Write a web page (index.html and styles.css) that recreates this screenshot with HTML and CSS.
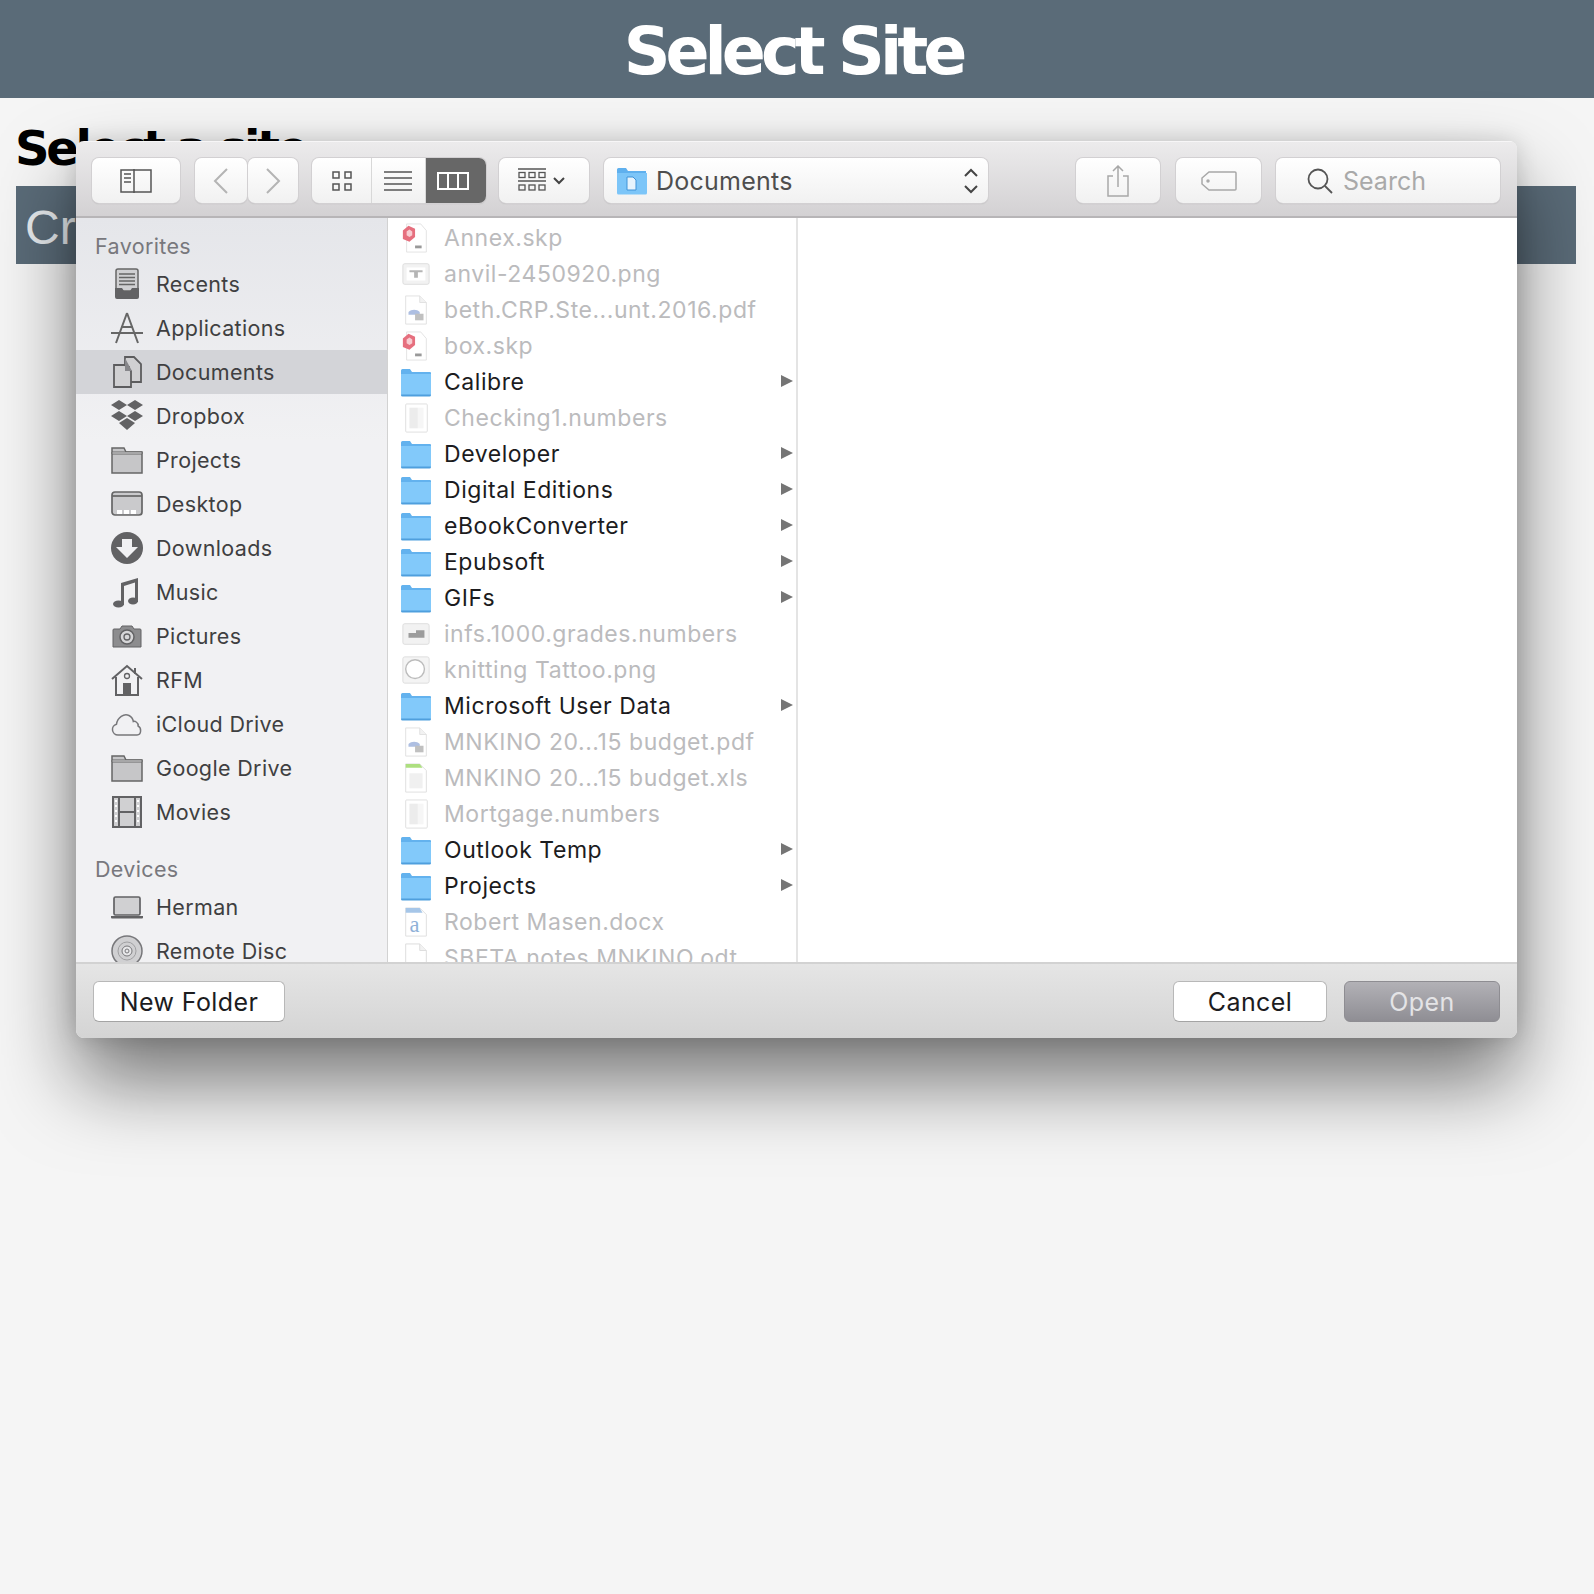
FILE: index.html
```html
<!DOCTYPE html>
<html lang="en">
<head>
  <meta charset="UTF-8" />
  <title>Select Site</title>
  <link rel="stylesheet" href="styles.css">
</head>
<body>
  <svg class="defs" xmlns="http://www.w3.org/2000/svg">
    <symbol id="i-folder" viewBox="0 0 32 30">
      <path d="M1 7V3.5A1.5 1.5 0 0 1 2.500 2H10l2 3h18a1 1 0 0 1 1 1v2H1z" fill="#63b2ee"/>
      <path d="M1 7h30v20a2 2 0 0 1-2 2H3a2 2 0 0 1-2-2z" fill="#82c9fa"/>
      <path d="M1 27.500h30V28a1.500 1.500 0 0 1-1.500 1.500h-27A1.500 1.500 0 0 1 1 28z" fill="#4f9fdd"/>
    </symbol>
    <symbol id="i-page" viewBox="0 0 32 32">
      <path d="M5 1h15l7 7v23H5z" fill="#fff" stroke="#dcdcdc"/>
      <path d="M20 1v7h7" fill="#f2f2f2" stroke="#dcdcdc"/>
    </symbol>
    <symbol id="i-skp" viewBox="0 0 32 32">
      <path d="M6 1h15l6 7v23H6z" fill="#fff" stroke="#e2e2e2"/>
      <path d="M2 8l6-5 7 3v9l-6 5-7-3z" fill="#e66f7e"/>
      <path d="M6 9l3-2 3 2v4l-3 2-3-2z" fill="#f8cdd2"/>
      <rect x="15" y="24" width="7" height="3" fill="#999"/>
    </symbol>
    <symbol id="i-thumb" viewBox="0 0 32 32">
      <rect x="2" y="5" width="28" height="22" rx="2" fill="#f2f2f2" stroke="#dcdcdc"/>
      <rect x="6" y="9" width="20" height="14" fill="#fff"/>
      <path d="M9 12h14v2h-5v6h-4v-6H9z" fill="#b5b5b5"/>
    </symbol>
    <symbol id="i-sheet" viewBox="0 0 32 32">
      <rect x="2" y="5" width="28" height="22" rx="2" fill="#f2f2f2" stroke="#dcdcdc"/>
      <path d="M8 15h8v-3h9v8H8z" fill="#9c9c9c"/>
    </symbol>
    <symbol id="i-ring" viewBox="0 0 32 32">
      <rect x="2" y="2" width="28" height="28" rx="2" fill="#f4f4f4" stroke="#dcdcdc"/>
      <circle cx="15" cy="15" r="10" fill="#fff" stroke="#bcbcbc" stroke-width="1.500"/>
    </symbol>
    <symbol id="i-pdf" viewBox="0 0 32 32">
      <path d="M5 1h15l7 7v23H5z" fill="#fff" stroke="#e0e0e0"/>
      <path d="M20 1v7h7" fill="#f2f2f2" stroke="#e0e0e0"/>
      <path d="M8 18c3-3 9-3 12 0v3H8z" fill="#aebfe2"/>
      <rect x="15" y="20" width="9" height="7" fill="#c0c0c0"/>
    </symbol>
    <symbol id="i-numbers" viewBox="0 0 32 32">
      <rect x="5" y="1" width="23" height="30" rx="1" fill="#fff" stroke="#dedede"/>
      <rect x="9" y="5" width="9" height="22" fill="#ececec"/>
      <rect x="18" y="5" width="6" height="22" fill="#f6f6f6"/>
    </symbol>
    <symbol id="i-xls" viewBox="0 0 32 32">
      <path d="M5 1h15l7 7v23H5z" fill="#fff" stroke="#dedede"/>
      <path d="M5 1h15l3 4H5z" fill="#addf7f"/>
      <rect x="9" y="11" width="14" height="16" fill="#f0f0f0"/>
    </symbol>
    <symbol id="i-docx" viewBox="0 0 32 32">
      <path d="M5 1h15l7 7v23H5z" fill="#fff" stroke="#dedede"/>
      <path d="M5 1h15l3 5H5z" fill="#a6c6e8"/>
      <text x="9" y="27" font-family="Liberation Serif, serif" font-size="24" fill="#8fb1d8">a</text>
    </symbol>

    <symbol id="s-recents" viewBox="0 0 32 32">
      <rect x="5" y="1" width="22" height="22" rx="2" fill="#d0d0d2" stroke="#666" stroke-width="1.500"/>
      <path d="M8 6h16M8 9.500h16M8 13h16M8 16.500h16" stroke="#666" stroke-width="1.500"/>
      <path d="M4 20h7l2 3h6l2-3h7v9a2 2 0 0 1-2 2H6a2 2 0 0 1-2-2z" fill="#626264"/>
    </symbol>
    <symbol id="s-apps" viewBox="0 0 32 32">
      <path d="M16 1L5 31M16 1l11 30M0 21h32M10 15h12" fill="none" stroke="#666" stroke-width="2"/>
    </symbol>
    <symbol id="s-docs" viewBox="0 0 32 32">
      <path d="M14 1h9l7 7v18H18V11h-4z" fill="#d0d0d2" stroke="#5c5c5e" stroke-width="1.800"/>
      <path d="M3 9h11l6 6v16H3z" fill="#d0d0d2" stroke="#5c5c5e" stroke-width="1.800"/>
      <path d="M14 2l7 13h-7z" fill="#86868a"/>
    </symbol>
    <symbol id="s-dropbox" viewBox="0 0 32 32" fill="#626264">
      <path d="M8 0l8 5-8 5-8-5zM24 0l8 5-8 5-8-5zM8 11l8 5-8 5-8-5zM24 11l8 5-8 5-8-5z"/>
      <path d="M16 18l8 5-8 7-8-7z"/>
    </symbol>
    <symbol id="s-folder" viewBox="0 0 32 32">
      <path d="M1 8V4h12l2 4h16v21H1z" fill="#c6c6c8" stroke="#666" stroke-width="1.500"/>
      <path d="M1 8h30v2H1z" fill="#e8e8ea" stroke="#666"/>
    </symbol>
    <symbol id="s-desktop" viewBox="0 0 32 32">
      <rect x="1" y="4" width="30" height="23" rx="3" fill="#cacacc" stroke="#666" stroke-width="1.700"/>
      <path d="M1 8h30" stroke="#666" stroke-width="1.700"/>
      <path d="M6 22h5v4H6zM13 22h5v4h-5zM20 22h5v4h-5z" fill="#fff"/>
    </symbol>
    <symbol id="s-downloads" viewBox="0 0 32 32">
      <circle cx="16" cy="16" r="16" fill="#626264"/>
      <path d="M11 7h10v8h6L16 26 5 15h6z" fill="#f1f1f3"/>
    </symbol>
    <symbol id="s-music" viewBox="0 0 32 32" fill="#626264">
      <path d="M10 7l17-5v24h-3V6.500L13 10v19h-3z"/>
      <ellipse cx="7.500" cy="28" rx="5.500" ry="3.500"/>
      <ellipse cx="22" cy="25" rx="5" ry="3.500"/>
    </symbol>
    <symbol id="s-camera" viewBox="0 0 32 32">
      <path d="M3 9h6l2-3h10l2 3h6a1 1 0 0 1 1 1v17H2V10a1 1 0 0 1 1-1z" fill="#8c8c8e" stroke="#626264"/>
      <circle cx="16" cy="17" r="7" fill="#d6d6d8" stroke="#626264" stroke-width="1.500"/>
      <circle cx="16" cy="17" r="3" fill="none" stroke="#626264" stroke-width="1.300"/>
    </symbol>
    <symbol id="s-house" viewBox="0 0 32 32">
      <path d="M1 15L16 2l15 13M5 13v18h22V13M24 4v6" fill="none" stroke="#626264" stroke-width="2"/>
      <circle cx="16" cy="12" r="2.500" fill="none" stroke="#626264" stroke-width="1.300"/>
      <rect x="12" y="19" width="8" height="12" fill="#626264"/>
    </symbol>
    <symbol id="s-cloud" viewBox="0 0 32 32">
      <path d="M7 27a5.500 5.500 0 0 1-1.500-10.800C6.500 9.500 13 5 18 7.500c2.500 1.200 4 3.500 4.300 6 1-.3 2-.2 3 .5 1.500 1 2 2.500 1.800 4 3.500 1.500 3.500 9-1 9z" fill="none" stroke="#77777a" stroke-width="1.500"/>
    </symbol>
    <symbol id="s-movies" viewBox="0 0 32 32">
      <rect x="2" y="1" width="28" height="30" fill="#d0d0d2" stroke="#626264" stroke-width="2"/>
      <path d="M8 1v30M24 1v30M8 16h16" stroke="#626264" stroke-width="2"/>
      <path d="M4 4h2v2H4zM4 9h2v2H4zM4 14h2v2H4zM4 19h2v2H4zM4 24h2v2H4zM26 4h2v2h-2zM26 9h2v2h-2zM26 14h2v2h-2zM26 19h2v2h-2zM26 24h2v2h-2z" fill="#fff"/>
    </symbol>
    <symbol id="s-laptop" viewBox="0 0 32 32">
      <rect x="3" y="6" width="26" height="18" rx="1.500" fill="#d0d0d2" stroke="#626264" stroke-width="1.700"/>
      <path d="M0 25h32v1.500a1 1 0 0 1-1 1H1a1 1 0 0 1-1-1z" fill="#626264"/>
    </symbol>
    <symbol id="s-disc" viewBox="0 0 32 32">
      <circle cx="16" cy="16" r="15" fill="#d0d0d2" stroke="#77777a" stroke-width="1.500"/>
      <circle cx="16" cy="16" r="9" fill="none" stroke="#a0a0a2"/>
      <circle cx="16" cy="16" r="5" fill="#e8e8ea" stroke="#77777a"/>
      <circle cx="16" cy="16" r="2" fill="none" stroke="#77777a"/>
    </symbol>
  </svg>

  <header class="site-header"><h1>Select Site</h1></header>
  <h2 class="page-title">Select a site</h2>
  <div class="create-bar">Create a new site</div>

  <div class="dialog">
    <div class="toolbar">
      <button class="tb-btn w-side">
        <svg width="32" height="24" viewBox="0 0 32 24" fill="none" stroke="#555"><rect x="1" y="1" width="30" height="22" stroke-width="1.500"/><path d="M14 0v24" stroke-width="1.500"/><path d="M4 5h7M4 9h7M4 13h7" stroke-width="1.500"/></svg>
      </button>
      <div class="nav-pair">
        <button class="tb-btn w-back">
          <svg width="16" height="26" viewBox="0 0 16 26" fill="none" stroke="#b4b4b4" stroke-width="2"><path d="M14 1L2 13l12 12"/></svg>
        </button>
        <button class="tb-btn w-next">
          <svg width="16" height="26" viewBox="0 0 16 26" fill="none" stroke="#b4b4b4" stroke-width="2"><path d="M2 1l12 12L2 25"/></svg>
        </button>
      </div>
      <div class="seg">
        <div class="seg-item w-icons">
          <svg width="20" height="20" viewBox="0 0 20 20" fill="none" stroke="#555" stroke-width="1.500"><rect x="1" y="1" width="6" height="6"/><rect x="13" y="1" width="6" height="6"/><rect x="1" y="13" width="6" height="6"/><rect x="13" y="13" width="6" height="6"/></svg>
        </div>
        <div class="seg-item w-list">
          <svg width="28" height="20" viewBox="0 0 28 20" fill="none" stroke="#555" stroke-width="1.500"><path d="M0 1h28M0 7h28M0 13h28M0 19h28"/></svg>
        </div>
        <div class="seg-item w-cols is-on">
          <svg width="32" height="18" viewBox="0 0 32 18" fill="none" stroke="#fff" stroke-width="2"><rect x="1" y="1" width="30" height="16"/><path d="M11 1v16M21 1v16"/></svg>
        </div>
      </div>
      <button class="tb-btn w-arrange">
        <svg width="28" height="26" viewBox="0 0 28 26" fill="none" stroke="#555" stroke-width="1.300"><path d="M0 1h28M0 13h28"/><rect x="1" y="4.500" width="6" height="5"/><rect x="11" y="4.500" width="6" height="5"/><rect x="21" y="4.500" width="6" height="5"/><rect x="1" y="17" width="6" height="5"/><rect x="11" y="17" width="6" height="5"/><rect x="21" y="17" width="6" height="5"/></svg>
        <svg width="12" height="8" viewBox="0 0 12 8" fill="none" stroke="#444" stroke-width="2"><path d="M1 1l5 5 5-5"/></svg>
      </button>
      <button class="tb-btn path-btn">
        <svg width="32" height="28" viewBox="0 0 32 28"><path d="M1 5V2.500A1.500 1.500 0 0 1 2.500 1H10l2 3h18v3H1z" fill="#5fb0ee"/><path d="M1 6h30v20a1.500 1.500 0 0 1-1.500 1.500h-27A1.500 1.500 0 0 1 1 26z" fill="#7cc5f8"/><path d="M11 10h6l3 3v10h-9z" fill="#e6f3fd" stroke="#3f93d8"/></svg>
        <span class="path-name">Documents</span>
        <svg class="updown" width="14" height="26" viewBox="0 0 14 26" fill="none" stroke="#444" stroke-width="2"><path d="M1 8l6-6 6 6M1 18l6 6 6-6"/></svg>
      </button>
      <button class="tb-btn w-share">
        <svg width="24" height="32" viewBox="0 0 24 32" fill="none" stroke="#a8a8a8" stroke-width="1.500"><path d="M7 11H2v20h20V11h-5M12 22V1M7 6l5-5 5 5"/></svg>
      </button>
      <button class="tb-btn w-tag">
        <svg width="36" height="20" viewBox="0 0 36 20" fill="none" stroke="#a8a8a8" stroke-width="1.500"><path d="M8 1h26a1 1 0 0 1 1 1v16a1 1 0 0 1-1 1H8l-7-6V7z"/><circle cx="7" cy="10" r="1" fill="#a8a8a8"/></svg>
      </button>
      <div class="tb-btn search-box">
        <svg width="26" height="26" viewBox="0 0 26 26" fill="none" stroke="#555" stroke-width="1.800"><circle cx="11" cy="11" r="9.500"/><path d="M18 18l7 7"/></svg>
        <span>Search</span>
      </div>
    </div>

    <div class="browser">
      <nav class="sidebar">
        <div class="side-head">Favorites</div>
        <div class="side-item"><svg class="side-icon"><use href="#s-recents"/></svg>Recents</div>
        <div class="side-item"><svg class="side-icon"><use href="#s-apps"/></svg>Applications</div>
        <div class="side-item is-current"><svg class="side-icon"><use href="#s-docs"/></svg>Documents</div>
        <div class="side-item"><svg class="side-icon"><use href="#s-dropbox"/></svg>Dropbox</div>
        <div class="side-item"><svg class="side-icon"><use href="#s-folder"/></svg>Projects</div>
        <div class="side-item"><svg class="side-icon"><use href="#s-desktop"/></svg>Desktop</div>
        <div class="side-item"><svg class="side-icon"><use href="#s-downloads"/></svg>Downloads</div>
        <div class="side-item"><svg class="side-icon"><use href="#s-music"/></svg>Music</div>
        <div class="side-item"><svg class="side-icon"><use href="#s-camera"/></svg>Pictures</div>
        <div class="side-item"><svg class="side-icon"><use href="#s-house"/></svg>RFM</div>
        <div class="side-item"><svg class="side-icon"><use href="#s-cloud"/></svg>iCloud Drive</div>
        <div class="side-item"><svg class="side-icon"><use href="#s-folder"/></svg>Google Drive</div>
        <div class="side-item"><svg class="side-icon"><use href="#s-movies"/></svg>Movies</div>
        <div class="side-head devices">Devices</div>
        <div class="side-item"><svg class="side-icon"><use href="#s-laptop"/></svg>Herman</div>
        <div class="side-item"><svg class="side-icon"><use href="#s-disc"/></svg>Remote Disc</div>
      </nav>

      <div class="file-col">
        <div class="file-row off"><svg class="file-icon"><use href="#i-skp"/></svg>Annex.skp</div>
        <div class="file-row off"><svg class="file-icon"><use href="#i-thumb"/></svg>anvil-2450920.png</div>
        <div class="file-row off"><svg class="file-icon"><use href="#i-pdf"/></svg>beth.CRP.Ste...unt.2016.pdf</div>
        <div class="file-row off"><svg class="file-icon"><use href="#i-skp"/></svg>box.skp</div>
        <div class="file-row dir"><svg class="file-icon"><use href="#i-folder"/></svg>Calibre</div>
        <div class="file-row off"><svg class="file-icon"><use href="#i-numbers"/></svg>Checking1.numbers</div>
        <div class="file-row dir"><svg class="file-icon"><use href="#i-folder"/></svg>Developer</div>
        <div class="file-row dir"><svg class="file-icon"><use href="#i-folder"/></svg>Digital Editions</div>
        <div class="file-row dir"><svg class="file-icon"><use href="#i-folder"/></svg>eBookConverter</div>
        <div class="file-row dir"><svg class="file-icon"><use href="#i-folder"/></svg>Epubsoft</div>
        <div class="file-row dir"><svg class="file-icon"><use href="#i-folder"/></svg>GIFs</div>
        <div class="file-row off"><svg class="file-icon"><use href="#i-sheet"/></svg>infs.1000.grades.numbers</div>
        <div class="file-row off"><svg class="file-icon"><use href="#i-ring"/></svg>knitting Tattoo.png</div>
        <div class="file-row dir"><svg class="file-icon"><use href="#i-folder"/></svg>Microsoft User Data</div>
        <div class="file-row off"><svg class="file-icon"><use href="#i-pdf"/></svg>MNKINO 20...15 budget.pdf</div>
        <div class="file-row off"><svg class="file-icon"><use href="#i-xls"/></svg>MNKINO 20...15 budget.xls</div>
        <div class="file-row off"><svg class="file-icon"><use href="#i-numbers"/></svg>Mortgage.numbers</div>
        <div class="file-row dir"><svg class="file-icon"><use href="#i-folder"/></svg>Outlook Temp</div>
        <div class="file-row dir"><svg class="file-icon"><use href="#i-folder"/></svg>Projects</div>
        <div class="file-row off"><svg class="file-icon"><use href="#i-docx"/></svg>Robert Masen.docx</div>
        <div class="file-row off"><svg class="file-icon"><use href="#i-page"/></svg>SBETA notes MNKINO.odt</div>
      </div>

      <div class="preview"></div>
    </div>

    <div class="dialog-foot">
      <button class="foot-btn new-folder">New Folder</button>
      <div class="foot-right">
        <button class="foot-btn cancel">Cancel</button>
        <button class="foot-btn open">Open</button>
      </div>
    </div>
  </div>
</body>
</html>
```
FILE: styles.css
```css
body {
  margin: 0;
  height: 1594px;
  background: #f5f5f5;
  font-family: "DejaVu Sans", sans-serif;
  overflow: hidden;
  position: relative;
}

.defs {
  display: none;
}

.site-header {
  box-sizing: border-box;
  height: 98px;
  padding: 4px 8px 0 0;
  background: #5a6b78;
  display: flex;
  align-items: center;
  justify-content: center;
}

.site-header h1 {
  margin: 0;
  color: white;
  font-size: 65px;
  font-weight: bold;
  letter-spacing: -5px;
}

.page-title {
  margin: 25px 0 0 15px;
  height: 63px;
  line-height: 50px;
  font-size: 48px;
  font-weight: bold;
  letter-spacing: -3.3px;
  color: black;
}

.create-bar {
  box-sizing: border-box;
  margin: 0 18px 0 16px;
  height: 78px;
  padding: 3px 0 0 9px;
  line-height: 78px;
  background: #5a6b78;
  color: #e6eaed;
  font-family: "Liberation Sans", sans-serif;
  font-size: 48px;
}

/* the file dialog floats over the page */
.dialog {
  position: absolute;
  left: 76px;
  top: 141px;
  width: 1441px;
  height: 897px;
  display: flex;
  flex-direction: column;
  border-radius: 8px;
  overflow: hidden;
  font-family: Inter, sans-serif;
  box-shadow: 0 44px 80px rgba(0,0,0,0.52), 0 0 22px rgba(0,0,0,0.14);
}

.toolbar {
  box-sizing: border-box;
  height: 77px;
  flex: none;
  padding: 16px 17px 0 15px;
  display: flex;
  background: linear-gradient(#ecebec, #d3d1d3);
  border-top: 1px solid #f7f6f7;
  border-bottom: 2px solid #b7b5b7;
}

.tb-btn {
  box-sizing: border-box;
  height: 45px;
  padding: 0;
  display: flex;
  align-items: center;
  justify-content: center;
  border: none;
  border-radius: 7px;
  background: linear-gradient(#ffffff, #f1f1f1);
  box-shadow: 0 0 0 1px #d2d0d2, 0 1px 1px #a9a7a9;
  font-family: inherit;
}

.w-side { width: 88px; margin: 0 15px 0 1px; }
.nav-pair { display: flex; gap: 1px; margin-right: 14px; }
.w-back { width: 52px; }
.w-next { width: 50px; }
.w-arrange { width: 90px; margin-right: 15px; gap: 7px; padding-right: 5px; }
.w-share { width: 84px; margin-left: auto; margin-right: 16px; }
.w-tag { width: 85px; margin-right: 15px; }

.seg {
  width: 174px;
  height: 45px;
  margin-right: 13px;
  display: flex;
  border-radius: 7px;
  overflow: hidden;
  background: linear-gradient(#ffffff, #f1f1f1);
  box-shadow: 0 0 0 1px #d2d0d2, 0 1px 1px #a9a7a9;
}

.seg-item {
  display: flex;
  align-items: center;
  justify-content: center;
  border-right: 1px solid #d8d8d8;
}

.w-icons { width: 59px; }
.w-list { width: 54px; padding-right: 2px; box-sizing: border-box; }
.w-cols { flex: 1; border-right: none; padding-right: 6px; }
.is-on { background: #676767; }

.path-btn {
  width: 384px;
  justify-content: flex-start;
  padding: 0 10px 0 12px;
  font-size: 25px;
  letter-spacing: .25px;
  color: #4e4e4e;
}

.path-name {
  margin-left: 8px;
}

.updown {
  margin-left: auto;
}

.search-box {
  width: 224px;
  justify-content: flex-start;
  padding-left: 31px;
  gap: 10px;
  font-size: 25px;
  color: #a9a9a9;
}

.browser {
  flex: 1;
  min-height: 0;
  display: flex;
  background: white;
}

.sidebar {
  width: 312px;
  flex: none;
  box-sizing: border-box;
  overflow: hidden;
  padding-top: 10px;
  border-right: 1px solid #d2d2d2;
  background: linear-gradient(#e5e6ea, #f1f1f3 30%, #f1f1f3);
  font-size: 21.5px;
  letter-spacing: .35px;
  color: #3f3f41;
}

.side-head {
  height: 34px;
  padding: 1px 0 0 19px;
  box-sizing: border-box;
  line-height: 34px;
  color: #78787d;
}

.side-head.devices {
  margin-top: 17px;
}

.side-item {
  height: 44px;
  display: flex;
  align-items: center;
  padding-left: 35px;
}

.side-item.is-current {
  background: #d3d4d8;
}

.side-icon {
  width: 32px;
  height: 32px;
  margin-right: 13px;
  flex: none;
}

.file-col {
  width: 410px;
  flex: none;
  box-sizing: border-box;
  overflow: hidden;
  padding-top: 2px;
  border-right: 2px solid #e4e4e4;
  font-size: 23px;
  letter-spacing: .55px;
}

.file-row {
  height: 36px;
  display: flex;
  align-items: center;
  padding-left: 12px;
  white-space: nowrap;
  position: relative;
}

.file-icon {
  width: 32px;
  height: 30px;
  margin-right: 12px;
  flex: none;
}

.file-row.off {
  color: #bbbbbd;
}

.file-row.dir {
  color: #1c1c1e;
}

.file-row.dir::after {
  content: "";
  position: absolute;
  right: 3px;
  top: 11px;
  border-left: 12px solid #757575;
  border-top: 6.5px solid transparent;
  border-bottom: 6.5px solid transparent;
}

.preview {
  flex: 1;
  background: white;
}

.dialog-foot {
  box-sizing: border-box;
  height: 76px;
  flex: none;
  display: flex;
  justify-content: space-between;
  padding: 17px 17px 0;
  background: linear-gradient(#e5e5e5, #d4d4d4);
  border-top: 2px solid #d2d2d2;
}

.foot-right {
  display: flex;
  gap: 17px;
}

.foot-btn {
  box-sizing: border-box;
  height: 41px;
  padding: 0;
  border: 1px solid #b8b8b8;
  border-bottom-color: #a4a4a4;
  border-radius: 6px;
  background: white;
  font-family: inherit;
  font-size: 25px;
  letter-spacing: .4px;
  color: #1c1c1e;
}

.new-folder { width: 192px; }
.cancel { width: 154px; }

.open {
  width: 156px;
  border-color: #8e8d92;
  background: linear-gradient(#b2b1b6, #8f8e94);
  color: #e4e4e6;
}
```
